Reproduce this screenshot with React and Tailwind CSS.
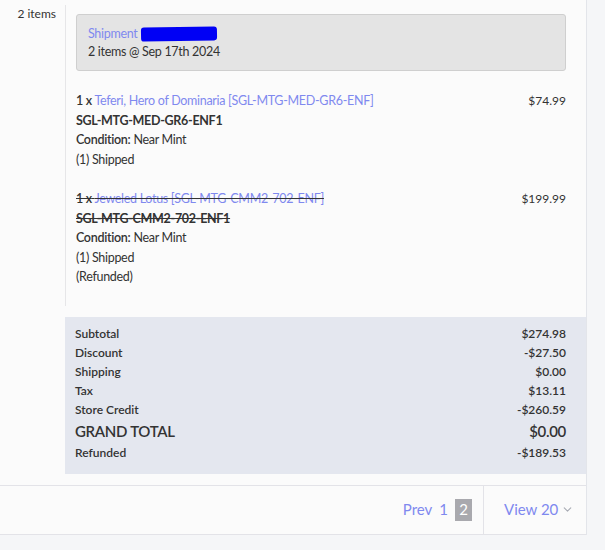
import { ChevronDown } from "lucide-react";

const items = [
    {
        qty: "1 x",
        name: "Teferi, Hero of Dominaria [SGL-MTG-MED-GR6-ENF]",
        sku: "SGL-MTG-MED-GR6-ENF1",
        condition: "Near Mint",
        price: "$74.99",
        status: ["(1) Shipped"],
        refunded: false,
    },
    {
        qty: "1 x",
        name: "Jeweled Lotus [SGL-MTG-CMM2-702-ENF]",
        sku: "SGL-MTG-CMM2-702-ENF1",
        condition: "Near Mint",
        price: "$199.99",
        status: ["(1) Shipped", "(Refunded)"],
        refunded: true,
    },
];

const totals = [
    ["Subtotal", "$274.98"],
    ["Discount", "-$27.50"],
    ["Shipping", "$0.00"],
    ["Tax", "$13.11"],
    ["Store Credit", "-$260.59"],
];

const App = () => {
    return (
        <div className="w-[605px] h-[550px] bg-[#f5f6f8] text-[#333] font-['Lato',sans-serif]">
            <div className="w-[587px] bg-[#fbfbfb] border-r border-[#e3e5ea]">
                <div className="flex">
                    <div className="w-[65px] shrink-0 pr-[9px] pt-[5px] text-right text-[12px] leading-[18px]">
                        2 items
                    </div>
                    <div className="flex-1 border-l border-[#e6e6e8] mt-[5px] pl-[10px] pr-[20px] pt-[9px] pb-[19px]">
                        <div className="h-[57px] rounded-[3px] border border-[#cfcfcf] bg-[#e4e4e4] px-[11px] pt-[10px] text-[12.5px] tracking-[-0.3px] leading-[18px]">
                            <div className="flex items-center">
                                <span className="text-[#7f89ef]">Shipment</span>
                                <span className="ml-[3px] inline-block h-[14px] w-[76px] rounded-[3px] bg-[#0000f5] -rotate-1"></span>
                            </div>
                            <div>2 items @ Sep 17th 2024</div>
                        </div>

                        <div className="mt-[20px] flex flex-col gap-[20px]">
                            {items.map((item) => (
                                <div key={item.sku} className="flex justify-between text-[12.5px] tracking-[-0.3px] leading-[19.5px]">
                                    <div>
                                        <div className={item.refunded ? "line-through" : ""}>
                                            <span className="font-semibold">{item.qty}</span>{" "}
                                            <span className="text-[#7f89ef]">{item.name}</span>
                                        </div>
                                        <div className={"font-bold " + (item.refunded ? "line-through" : "")}>{item.sku}</div>
                                        <div>
                                            <span className="font-semibold">Condition:</span> {item.condition}
                                        </div>
                                        {item.status.map((s) => (
                                            <div key={s}>{s}</div>
                                        ))}
                                    </div>
                                    <div className="text-[12px] tracking-normal">{item.price}</div>
                                </div>
                            ))}
                        </div>
                    </div>
                </div>

                <div className="ml-[65px] mt-[11px] bg-[#e4e7ef] pl-[10px] pr-[20px] pt-[7px] pb-[12px] text-[12px] font-semibold leading-[19px]">
                    {totals.map(([label, value]) => (
                        <div key={label} className="flex justify-between">
                            <span>{label}</span>
                            <span>{value}</span>
                        </div>
                    ))}
                    <div className="flex justify-between text-[15px] tracking-[-0.3px] leading-[24px]">
                        <span>GRAND TOTAL</span>
                        <span>$0.00</span>
                    </div>
                    <div className="flex justify-between">
                        <span>Refunded</span>
                        <span>-$189.53</span>
                    </div>
                </div>

                <div className="mt-[11px] h-[50px] border-y border-[#e3e3e8] flex justify-end text-[15px] text-[#7f89ef]">
                    <div className="flex items-center pr-[11px]">
                        <span className="mr-[7px]">Prev</span>
                        <span className="mr-[7px]">1</span>
                        <span className="bg-[#a9a9ae] text-white w-[17px] h-[22px] flex items-center justify-center">2</span>
                    </div>
                    <div className="w-[103px] border-l border-[#e3e3e8] flex items-center pl-[20px]">
                        <span>View 20</span>
                        <ChevronDown className="ml-[3px] w-[13px] h-[13px] text-[#a8abb4]" strokeWidth={2} />
                    </div>
                </div>
            </div>
        </div>
    );
};

export default App;
